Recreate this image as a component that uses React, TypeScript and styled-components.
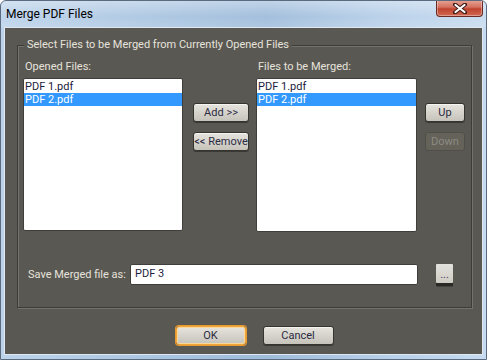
import React from "react";
import styled, { createGlobalStyle } from "styled-components";

const FONT = `Roboto, "Noto Sans", "DejaVu Sans", sans-serif`;

const Global = createGlobalStyle`
  html, body { margin: 0; padding: 0; background: #ffffff; }
  * { box-sizing: border-box; }
  body { font-family: ${FONT}; font-size: 11px; }
`;

const Window = styled.div`
  width: 487px;
  height: 360px;
  display: flex;
  flex-direction: column;
  border: 1px solid #5a6b80;
  border-radius: 6px 6px 0 0;
  background: linear-gradient(90deg, #bcd3ea 0%, #a9c4e0 35%, #9fbcdb 55%, #b8d0e9 80%, #c6dbef 100%);
  overflow: hidden;
`;

const TitleBar = styled.div`
  height: 26px;
  flex: none;
  display: flex;
  align-items: flex-start;
  justify-content: space-between;
  padding-left: 5px;
  background: linear-gradient(180deg, rgba(255,255,255,0.35) 0%, rgba(255,255,255,0.05) 60%, rgba(255,255,255,0.15) 100%);
`;

const Title = styled.span`
  font-family: ${FONT};
  font-size: 12px;
  line-height: 26px;
  color: #000;
`;

const CloseButton = styled.div`
  width: 47px;
  height: 17px;
  margin-top: -1px;
  margin-right: 3px;
  display: flex;
  align-items: center;
  justify-content: center;
  border: 1px solid #6b2b24;
  border-top: none;
  border-radius: 0 0 4px 4px;
  background: linear-gradient(180deg, #e8a597 0%, #d4705f 45%, #c0432f 55%, #d06a52 100%);
  box-shadow: inset 0 0 0 1px rgba(255,255,255,0.35);
`;

const Client = styled.div`
  flex: 1;
  margin: 0 3px 4px 3px;
  border: 1px solid #dfe8f2;
  background: #5a5853;
  display: flex;
  flex-direction: column;
  color: #e6e3dc;
`;

const Group = styled.fieldset`
  margin: 10px 10px 0 12px;
  padding: 8px 0 22px 5px;
  border: 1px solid #3d3c38;
  box-shadow: 1px 1px 0 0 #74726c, inset 1px 1px 0 0 #74726c;
  min-width: 0;
`;

const Legend = styled.legend`
  margin-left: 1px;
  padding: 0 3px 0 3px;
  font-size: 11px;
  line-height: 14px;
  color: #e6e3dc;
  background: #5a5853;
`;

const Columns = styled.div`
  display: flex;
  align-items: flex-start;
`;

const Column = styled.div<{ $w: number; $ml?: number }>`
  width: ${(p) => p.$w}px;
  margin-left: ${(p) => p.$ml ?? 0}px;
  display: flex;
  flex-direction: column;
`;

const FieldLabel = styled.div`
  font-size: 11px;
  line-height: 13px;
  height: 13px;
  padding-left: 2px;
  margin-bottom: 5px;
  white-space: nowrap;
  color: #e6e3dc;
`;

const ListBox = styled.div<{ $h: number }>`
  height: ${(p) => p.$h}px;
  background: #ffffff;
  border: 1px solid #3f3e3a;
  border-radius: 2px;
  padding: 1px 0 0 0;
  display: flex;
  flex-direction: column;
`;

const ListItem = styled.div<{ $selected?: boolean }>`
  height: 13px;
  line-height: 13px;
  padding-left: 1px;
  font-size: 11px;
  white-space: nowrap;
  color: ${(p) => (p.$selected ? "#ffffff" : "#1c1c3c")};
  background: ${(p) => (p.$selected ? "#3399ff" : "transparent")};
`;

const ButtonStack = styled.div<{ $ml: number }>`
  margin-left: ${(p) => p.$ml}px;
  margin-top: 43px;
  display: flex;
  flex-direction: column;
  gap: 10px;
`;

const Button = styled.button<{ $w: number; $h?: number; $default?: boolean }>`
  width: ${(p) => p.$w}px;
  height: ${(p) => p.$h ?? 19}px;
  padding: 0;
  margin: 0;
  font-family: ${FONT};
  font-size: 11px;
  line-height: 1;
  color: #2b2b42;
  white-space: nowrap;
  overflow: visible;
  border: 1px solid ${(p) => (p.$default ? "#f0a53a" : "#35342f")};
  border-radius: 3px;
  background: linear-gradient(180deg, #e6e4de 0%, #d6d3cc 50%, #c6c3bb 100%);
  box-shadow: ${(p) =>
    p.$default
      ? "0 0 0 1px #e89a30, inset 0 0 0 1px #f7d79a"
      : "inset 0 1px 0 rgba(255,255,255,0.6), 0 1px 0 #3a3935"};
  display: flex;
  align-items: center;
  justify-content: center;

  &:disabled {
    background: #646259;
    border-color: #504e49;
    color: #8d8b84;
    box-shadow: none;
  }
`;

const SaveRow = styled.div`
  display: grid;
  grid-template-columns: 102px 288px 17px;
  column-gap: 0;
  align-items: center;
  margin-top: 32px;
  padding-left: 5px;
`;

const SaveLabel = styled.span`
  font-size: 11px;
  color: #e6e3dc;
  white-space: nowrap;
`;

const TextInput = styled.div`
  height: 21px;
  background: #ffffff;
  border: 1px solid #3f3e3a;
  border-radius: 2px;
  padding-left: 4px;
  font-size: 11px;
  line-height: 17px;
  color: #1c1c3c;
`;

const BrowseButton = styled.button`
  margin-left: 18px;
  width: 17px;
  height: 19px;
  margin-top: -2px;
  padding: 0 0 3px 0;
  border: none;
  border-radius: 1px;
  background: linear-gradient(180deg, #e4e2dc 0%, #cfccc5 100%);
  box-shadow: 0 3px 0 #2a2926, 0 4px 0 rgba(0,0,0,0.25);
  font-family: ${FONT};
  font-size: 11px;
  color: #4a3a6a;
  display: flex;
  align-items: flex-end;
  justify-content: center;
  line-height: 1;
`;

const Footer = styled.div`
  display: flex;
  justify-content: center;
  gap: 17px;
  margin-top: 18px;
  padding-left: 22px;
`;

export default function App() {
  return (
    <>
      <Global />
      <Window>
        <TitleBar>
          <Title>Merge PDF Files</Title>
          <CloseButton>
            <svg width="14" height="11" viewBox="0 0 14 11">
              <path
                d="M2 1.5 L12 9.5 M12 1.5 L2 9.5"
                stroke="#3a1a16"
                strokeWidth="4"
                strokeLinecap="round"
              />
              <path
                d="M2.5 2 L11.5 9 M11.5 2 L2.5 9"
                stroke="#ffffff"
                strokeWidth="2.2"
                strokeLinecap="round"
              />
            </svg>
          </CloseButton>
        </TitleBar>
        <Client>
          <Group>
            <Legend>Select Files to be Merged from Currently Opened Files</Legend>
            <Columns>
              <Column $w={160}>
                <FieldLabel>Opened Files:</FieldLabel>
                <ListBox $h={153}>
                  <ListItem>PDF 1.pdf</ListItem>
                  <ListItem $selected>PDF 2.pdf</ListItem>
                </ListBox>
              </Column>
              <ButtonStack $ml={10}>
                <Button $w={56}>Add &gt;&gt;</Button>
                <Button $w={56}>&lt;&lt; Remove</Button>
              </ButtonStack>
              <Column $w={161} $ml={7}>
                <FieldLabel>Files to be Merged:</FieldLabel>
                <ListBox $h={154}>
                  <ListItem>PDF 1.pdf</ListItem>
                  <ListItem $selected>PDF 2.pdf</ListItem>
                </ListBox>
              </Column>
              <ButtonStack $ml={8}>
                <Button $w={40}>Up</Button>
                <Button $w={40} disabled>
                  Down
                </Button>
              </ButtonStack>
            </Columns>
            <SaveRow>
              <SaveLabel>Save Merged file as:</SaveLabel>
              <TextInput>PDF 3</TextInput>
              <BrowseButton>...</BrowseButton>
            </SaveRow>
          </Group>
          <Footer>
            <Button $w={70} $default>
              OK
            </Button>
            <Button $w={71}>Cancel</Button>
          </Footer>
        </Client>
      </Window>
    </>
  );
}
